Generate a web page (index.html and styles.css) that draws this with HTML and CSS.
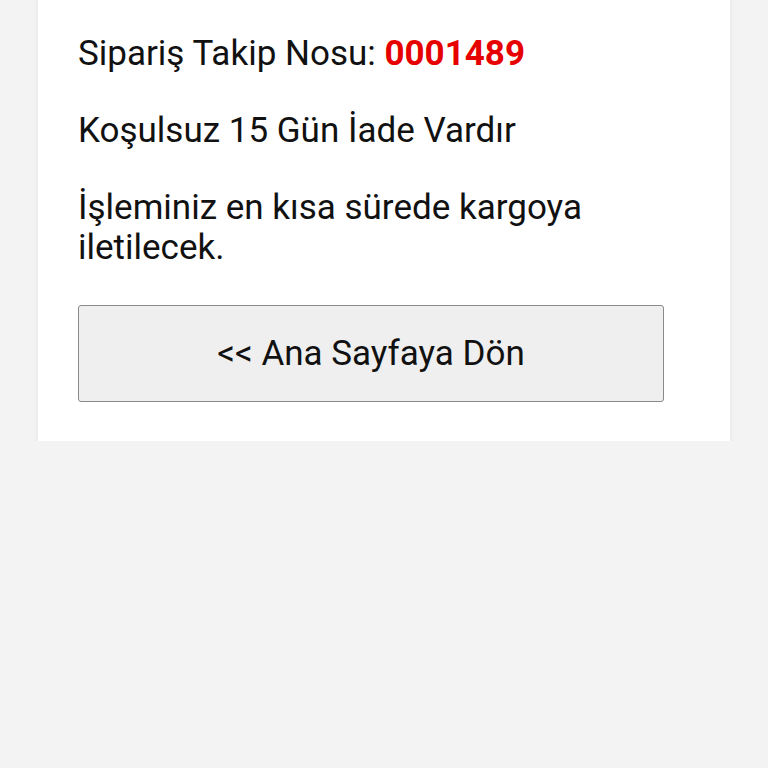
FILE: index.html
```html
<!DOCTYPE html>
<html lang="tr">
<head>
  <meta charset="UTF-8" />
  <meta name="viewport" content="width=device-width, initial-scale=1.0"/>
  <title>Sipariş Tamamlandı</title>
  <link rel="stylesheet" href="styles.css">
</head>
<body>
  <main class="card">
    <p>Sipariş Takip Nosu: <strong class="order-no">0001489</strong></p>
    <p>Koşulsuz 15 Gün İade Vardır</p>
    <p>İşleminiz en kısa sürede kargoya iletilecek.</p>
    <button type="button">&lt;&lt; Ana Sayfaya Dön</button>
  </main>
</body>
</html>
```

FILE: styles.css
```css
body {
  font-family: Roboto, 'Noto Sans', sans-serif;
  background: #f3f3f3;
  color: #111;
  margin: 0;
  padding: 0 38px;
}
.card {
  background: #fff;
  margin-top: -20px;
  padding: 54px 40px 39px;
  box-shadow: 0 2px 6px rgba(0, 0, 0, 0.06);
}
.card p {
  font-size: 35px;
  line-height: 40px;
  margin: 0 0 37px;
  max-width: 560px;
}
.order-no {
  color: #e60000;
  font-weight: 700;
}
button {
  display: block;
  width: 586px;
  height: 97px;
  margin: 0;
  background: #efefef;
  color: #111;
  border: 1px solid #8a8a8a;
  border-radius: 3px;
  font-family: inherit;
  font-size: 35px;
}
```
